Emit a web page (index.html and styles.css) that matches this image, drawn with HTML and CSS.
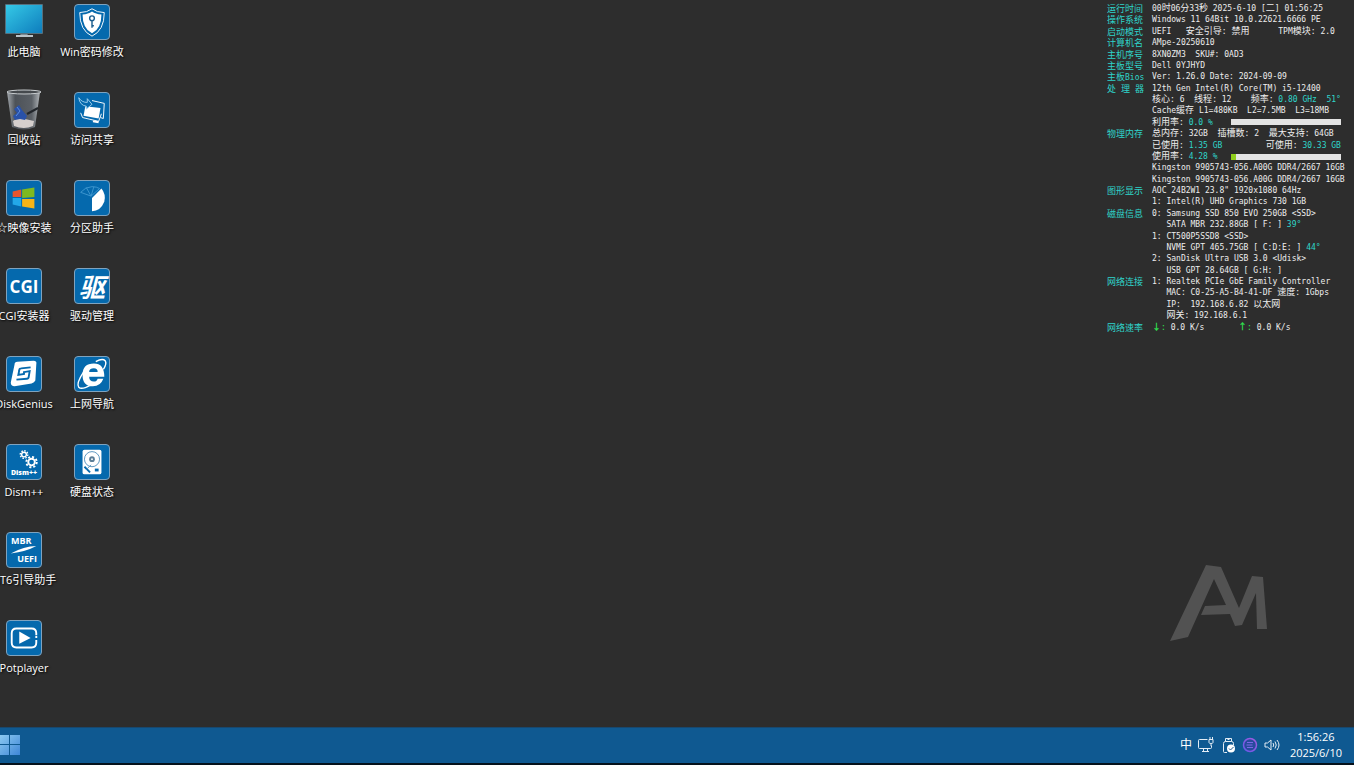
FILE: index.html
```html
<!DOCTYPE html>
<html lang="zh-CN">
<head>
    <meta charset="UTF-8">
    <meta name="viewport" content="width=device-width, initial-scale=1.0">
    <title>AMpe</title>
    <link rel="stylesheet" href="styles.css">
</head>
<body>
    <main class="desktop">
        <div class="icons">
            <button class="item">
                <svg class="pic" viewBox="0 0 36 36">
                    <defs>
                        <linearGradient id="screen" x1="0" y1="0" x2="1" y2="1">
                            <stop offset="0" stop-color="#35c9e6"/>
                            <stop offset="1" stop-color="#0e7dbd"/>
                        </linearGradient>
                    </defs>
                    <path d="M15 28h6l1 4h-8z" fill="#7d8a92"/>
                    <rect x="10" y="31" width="17" height="2" fill="#b9c2c8"/>
                    <rect x="-1" y="0" width="38" height="30" rx="1" fill="#56707d"/>
                    <rect x="0" y="1" width="36" height="28" fill="url(#screen)"/>
                </svg>
                <span class="label">此电脑</span>
            </button>
            <button class="item">
                <svg class="pic" viewBox="0 0 36 36">
                    <defs>
                        <linearGradient id="bin" x1="0" y1="0" x2="1" y2="0">
                            <stop offset="0" stop-color="#a3a8ad"/>
                            <stop offset="0.25" stop-color="#4d5258"/>
                            <stop offset="0.75" stop-color="#5b6066"/>
                            <stop offset="1" stop-color="#b0b4b8"/>
                        </linearGradient>
                    </defs>
                    <path d="M1 0l5 35q12 5 23 0l5-35z" fill="url(#bin)"/>
                    <path d="M7 29q6-5 12-2l9 2-1 5q-9 4-19 0z" fill="#d5cfcd"/>
                    <path d="M8 17l5-4 3 5 5 6-2 4-5-1-5 1-2-4 4-3z" fill="#2951a8"/>
                    <path d="M11 15l3 4-4 5" stroke="#5b8de0" fill="none"/>
                    <path d="M21 22l11-6" stroke="#22262b" stroke-width="2"/>
                    <ellipse cx="18" cy="0" rx="17" ry="2" fill="#45494d" stroke="#c9cdd0"/>
                </svg>
                <span class="label">回收站</span>
            </button>
            <button class="item">
                <span class="tile">
                    <svg viewBox="0 0 36 36">
                        <path d="M6 11l9-2v8H6z" fill="#e8552d"/>
                        <path d="M16 9l13-2v10l-13 1z" fill="#7eb920"/>
                        <path d="M6 18h9v9l-9-2z" fill="#23a8e8"/>
                        <path d="M16 19h13v10l-13-2z" fill="#f7b417"/>
                    </svg>
                </span>
                <span class="label">☆映像安装</span>
            </button>
            <button class="item">
                <span class="tile cgi">CGI</span>
                <span class="label">CGI安装器</span>
            </button>
            <button class="item">
                <span class="tile">
                    <svg viewBox="0 0 36 36">
                        <path d="M11 5l17-1q4 0 3 4l-1 17q-1 2-4 3L8 31q-4 0-4-4L8 8q0-3 3-3z" fill="#fff"/>
                        <path d="M25 11l-10 1q-2 0-2 2l-1 5 6-1v-3M10 24l11-1q2 0 2-2l1-6-6 1" fill="none" stroke="#0569ad" stroke-width="2"/>
                    </svg>
                </span>
                <span class="label">DiskGenius</span>
            </button>
            <button class="item">
                <span class="tile dism">
                    <svg viewBox="0 0 36 24" fill="none" stroke="#fff">
                        <circle cx="18" cy="8" r="2.500" stroke-width="1.500"/>
                        <circle cx="18" cy="8" r="4" stroke-width="1.500" stroke-dasharray="1.600 1.500"/>
                        <circle cx="26" cy="16" r="3.500" stroke-width="2"/>
                        <circle cx="26" cy="16" r="5.500" stroke-width="2" stroke-dasharray="2.200 2.100"/>
                    </svg>
                    <span>Dism++</span>
                </span>
                <span class="label">Dism++</span>
            </button>
            <button class="item">
                <span class="tile boot">
                    <span>MBR</span>
                    <svg viewBox="0 0 36 8"><path d="M4 8Q18 0 31 0 20 6 4 8z" fill="#fff"/></svg>
                    <span class="uefi">UEFI</span>
                </span>
                <span class="label">NT6引导助手</span>
            </button>
            <button class="item">
                <span class="tile">
                    <svg viewBox="0 0 36 36">
                        <path d="M31 15v-2q0-5-5-5H10q-5 0-5 5v10q0 5 5 5h16q5 0 5-5v-3M31 16v2" fill="none" stroke="#fff" stroke-width="2"/>
                        <path d="M13 11l12 7-12 6z" fill="#fff"/>
                    </svg>
                </span>
                <span class="label">Potplayer</span>
            </button>

            <button class="item">
                <span class="tile">
                    <svg viewBox="0 0 36 36">
                        <path d="M18 4q5 4 13 4 0 19-13 25Q5 27 5 8q8 0 13-4z" fill="none" stroke="#fff"/>
                        <path d="M18 7q4 3 10 3 0 15-10 20Q8 25 8 10q6 0 10-3z" fill="#fff"/>
                        <circle cx="18" cy="14" r="2.500" fill="none" stroke="#1b5d8e" stroke-width="1.500"/>
                        <path d="M18 17v7M18 22h2" stroke="#1b5d8e" stroke-width="1.500"/>
                    </svg>
                </span>
                <span class="label">Win密码修改</span>
            </button>
            <button class="item">
                <span class="tile">
                    <svg viewBox="0 0 36 36">
                        <path d="M18 8l13 3-1 16-3-1" fill="none" stroke="#fff"/>
                        <path d="M11 14l16 2-2 11-16-3z" fill="#fff"/>
                        <path d="M6 21l2 5 17 4 3-8" fill="none" stroke="#fff"/>
                        <path d="M4 5q3 5 9 5V6l5 6-6 5v-3Q5 13 4 5z" fill="#0569ad" stroke="#9fd0ee"/>
                        <path d="M19 30l6 1" stroke="#fff" stroke-width="2"/>
                    </svg>
                </span>
                <span class="label">访问共享</span>
            </button>
            <button class="item">
                <span class="tile">
                    <svg viewBox="0 0 36 36">
                        <path d="M18 18L28 8q5 6 3 14-4 10-13 10z" fill="#fff"/>
                        <path d="M17 16L6 12q5-6 12-6 5 0 8 2zM17 16L12 7M17 16l3-10" fill="none" stroke="#3f97cf"/>
                    </svg>
                </span>
                <span class="label">分区助手</span>
            </button>
            <button class="item">
                <span class="tile drive">驱</span>
                <span class="label">驱动管理</span>
            </button>
            <button class="item">
                <span class="tile">
                    <svg viewBox="0 0 36 36">
                        <path d="M30 23q-3 8-11 8Q8 31 8 19 8 7 20 7q11 0 11 14H15q0 5 5 5 3 0 4-3zM15 16h9q0-4-4-4-5 0-5 4z" fill="#fff" fill-rule="evenodd"/>
                        <path d="M22 5q7-4 10-1 2 3-2 9M9 16Q1 28 4 32q3 3 12-2" fill="none" stroke="#fff" stroke-width="1.500"/>
                    </svg>
                </span>
                <span class="label">上网导航</span>
            </button>
            <button class="item">
                <span class="tile">
                    <svg viewBox="0 0 36 36">
                        <rect x="8" y="5" width="20" height="26" rx="2" fill="#fff"/>
                        <circle cx="18" cy="15" r="8" fill="#fff" stroke="#5793bd"/>
                        <circle cx="18" cy="15" r="3" fill="#5d7f98"/>
                        <circle cx="18" cy="15" r="1" fill="#fff"/>
                        <path d="M10 23l6 6" stroke="#0569ad" stroke-width="2"/>
                        <path d="M21 25h4v3h-4z" fill="#0569ad"/>
                        <path d="M17 21l-5 5" stroke="#5793bd"/>
                    </svg>
                </span>
                <span class="label">硬盘状态</span>
            </button>
        </div>

        <aside class="side">
            <dl class="info">
                <dt>运行时间</dt>
                <dd>00<b>时</b>06<b>分</b>33<b>秒</b> 2025-6-10 [<b>二</b>] 01:56:25</dd>
                <dt>操作系统</dt>
                <dd>Windows 11 64Bit 10.0.22621.6666 PE</dd>
                <dt>启动模式</dt>
                <dd>UEFI   <b>安全引导</b>: <b>禁用</b>      TPM<b>模块</b>: 2.0</dd>
                <dt>计算机名</dt>
                <dd>AMpe-20250610</dd>
                <dt>主机序号</dt>
                <dd>8XN0ZM3  SKU#: 0AD3</dd>
                <dt>主板型号</dt>
                <dd>Dell 0YJHYD</dd>
                <dt>主板<span class="latin">Bios</span></dt>
                <dd>Ver: 1.26.0 Date: 2024-09-09</dd>
                <dt class="spread"><span>处</span><span>理</span><span>器</span></dt>
                <dd>12th Gen Intel(R) Core(TM) i5-12400</dd>
                <dd><b>核心</b>: 6  <b>线程</b>: 12    <b>频率</b>: <em>0.80 GHz  51°</em></dd>
                <dd>Cache<b>缓存</b> L1=480KB  L2=7.5MB  L3=18MB</dd>
                <dd class="usage"><label for="cpu"><b>利用率</b>: <em>0.0 %</em></label><progress id="cpu" value="0" max="100"></progress></dd>
                <dt>物理内存</dt>
                <dd><b>总内存</b>: 32GB  <b>插槽数</b>: 2  <b>最大支持</b>: 64GB</dd>
                <dd><b>已使用</b>: <em>1.35 GB</em>         <b>可使用</b>: <em>30.33 GB</em></dd>
                <dd class="usage"><label for="mem"><b>使用率</b>: <em>4.28 %</em></label><progress id="mem" value="4.28" max="100"></progress></dd>
                <dd>Kingston 9905743-056.A00G DDR4/2667 16GB</dd>
                <dd>Kingston 9905743-056.A00G DDR4/2667 16GB</dd>
                <dt>图形显示</dt>
                <dd>AOC 24B2W1 23.8" 1920x1080 64Hz</dd>
                <dd>1: Intel(R) UHD Graphics 730 1GB</dd>
                <dt>磁盘信息</dt>
                <dd>0: Samsung SSD 850 EVO 250GB &lt;SSD&gt;</dd>
                <dd>   SATA MBR 232.88GB [ F: ] <em>39°</em></dd>
                <dd>1: CT500P5SSD8 &lt;SSD&gt;</dd>
                <dd>   NVME GPT 465.75GB [ C:D:E: ] <em>44°</em></dd>
                <dd>2: SanDisk Ultra USB 3.0 &lt;Udisk&gt;</dd>
                <dd>   USB GPT 28.64GB [ G:H: ]</dd>
                <dt>网络连接</dt>
                <dd>1: Realtek PCIe GbE Family Controller</dd>
                <dd>   MAC: C0-25-A5-B4-41-DF <b>速度</b>: 1Gbps</dd>
                <dd>   IP:  192.168.6.82 <b>以太网</b></dd>
                <dd>   <b>网关</b>: 192.168.6.1</dd>
                <dt>网络速率</dt>
                <dd><i><b>↓</b>:</i> 0.0 K/s       <i><b>↑</b>:</i> 0.0 K/s</dd>
            </dl>
            <svg class="logo" viewBox="0 0 97 76">
                <path d="M0 76L36 0l15 2 18 41L82 11l11 1 4 52H87L86 28 72 60l-7 1-5-12-29 1 4-9 21-1L44 14 18 72z" fill="#525252"/>
            </svg>
        </aside>
    </main>

    <footer class="taskbar">
        <button class="start" aria-label="开始">
            <svg viewBox="0 0 20 20">
                <defs>
                    <linearGradient id="start" x1="0" y1="0" x2="1" y2="1">
                        <stop offset="0" stop-color="#8ccaf2"/>
                        <stop offset="1" stop-color="#3f86d6"/>
                    </linearGradient>
                </defs>
                <path d="M0 0h9v9H0zM10 0h10v9H10zM0 10h9v10H0zM10 10h10v10H10z" fill="url(#start)"/>
            </svg>
        </button>
        <div class="tray">
            <span class="ime">中</span>
            <svg viewBox="0 0 16 16" fill="none" stroke="#e4edf5">
                <path d="M9.500 2.500h-8q-1 0-1 1v7q0 1 1 1h11q1 0 1-1v-2M4 14.500h7M5.500 12v2M9.500 12v2M11 2.500h4v3q0 1-2 1t-2-1zM12 0v2M14.500 0v2M13 7v2"/>
            </svg>
            <svg viewBox="0 0 16 16" fill="none" stroke="#e4edf5">
                <path d="M5.500 4.500v-3h6v3M7 15.500H4.500q-1 0-1-1v-8q0-2 2-2h6q2 0 2 2V8M7.500 2.500h2"/>
                <circle cx="11" cy="11.500" r="4" fill="#fff" stroke="none"/>
                <path d="M9 11.500l1.500 1.500 3-3" stroke="#205d91"/>
            </svg>
            <svg viewBox="0 0 16 16" fill="none">
                <defs>
                    <linearGradient id="ring" x1="0" y1="1" x2="1" y2="0">
                        <stop offset="0" stop-color="#6658e8"/>
                        <stop offset="1" stop-color="#a45ce0"/>
                    </linearGradient>
                </defs>
                <circle cx="8" cy="8" r="6.500" fill="#284a9c" stroke="url(#ring)" stroke-width="1.500"/>
                <path d="M5 5.500h6M4.500 8h6M5 10.500h6" stroke="#7a68e6"/>
            </svg>
            <svg viewBox="0 0 16 16" fill="none" stroke="#e4edf5">
                <path d="M1 6h2.500L7 3v10l-3.500-3H1zM9 6q1.500 2 0 4M11 4.500q2.500 3.500 0 7M13 3q4 5 0 10"/>
            </svg>
            <time class="clock">1:56:26<br>2025/6/10</time>
        </div>
    </footer>
</body>
</html>
```

FILE: styles.css
```css
* {
    box-sizing: border-box;
}

body {
    margin: 0;
    height: 100vh;
    display: flex;
    flex-direction: column;
    overflow: hidden;
    background-color: #2d2d2d;
    color: #fff;
    font-family: "Open Sans", "Noto Sans CJK SC", sans-serif;
    font-size: 11px;
}
button {
    padding: 0;
    border: none;
    background: none;
    color: inherit;
    font: inherit;
    cursor: pointer;
}
svg {
    display: block;
}

/* desktop */
.desktop {
    flex: 1;
    min-height: 0;
    display: flex;
    justify-content: space-between;
}
.icons {
    display: grid;
    grid-auto-flow: column;
    grid-template-rows: repeat(8, 56px);
    grid-auto-columns: 48px;
    gap: 32px 20px;
    padding-top: 4px;
}
.item {
    display: flex;
    flex-direction: column;
    align-items: center;
    gap: 4px;
}
.pic {
    width: 36px;
    height: 36px;
    overflow: visible;
}
.tile {
    display: flex;
    flex-direction: column;
    align-items: center;
    justify-content: center;
    width: 36px;
    height: 36px;
    border: 1px solid #7fa3bf;
    border-radius: 4px;
    background-color: #0569ad;
    font-weight: bold;
}
.tile svg {
    width: 100%;
}
.label {
    line-height: 16px;
    white-space: nowrap;
    text-shadow: 1px 1px 2px #000;
}
.cgi {
    font-size: 17px;
}
.drive {
    font-family: "Noto Sans CJK SC", sans-serif;
    font-size: 26px;
    font-style: italic;
    line-height: 34px;
}
.dism {
    font-size: 7px;
    font-weight: 800;
    line-height: 8px;
}
.boot {
    font-size: 9px;
    line-height: 10px;
    align-items: flex-start;
}
.boot span {
    padding: 0 4px;
}
.boot .uefi {
    align-self: flex-end;
}

/* system info */
.side {
    display: flex;
    flex-direction: column;
    justify-content: space-between;
    width: 247px;
    padding: 3px 0 86px;
}
.info {
    display: grid;
    grid-template-columns: 45px 1fr;
    grid-template-rows: repeat(29, minmax(0, 1fr));
    height: 330px;
    margin: 0;
    color: #eee;
    font-family: "DejaVu Sans Mono", "Noto Sans CJK SC", monospace;
    font-size: 8px;
    line-height: 11px;
    white-space: pre;
}
.info dt {
    grid-column: 1;
    padding-top: 1px;
    color: #2fd5cb;
    font-size: 9px;
}
.info dd {
    grid-column: 2;
    margin: 0;
}
.info b {
    font-size: 9px;
    font-weight: normal;
    line-height: 0;
}
.info em {
    color: #2fd5cb;
    font-style: normal;
}
.info i {
    color: #2fe04f;
    font-style: normal;
}
.info i b {
    font-family: "Noto Sans CJK SC", sans-serif;
    font-weight: bold;
}
.latin {
    font-size: 8px;
}
.spread {
    display: flex;
    justify-content: space-between;
    padding-right: 8px;
}
.usage {
    display: flex;
    align-items: center;
    justify-content: space-between;
}
progress {
    appearance: none;
    width: 110px;
    height: 6px;
    margin-right: 13px;
    border: none;
    background-color: #e3e3e3;
}
progress::-webkit-progress-bar {
    background-color: #e3e3e3;
}
progress::-webkit-progress-value {
    background-color: #8fce1c;
}
.logo {
    width: 97px;
    margin-left: 63px;
}

/* taskbar */
.taskbar {
    display: flex;
    align-items: center;
    justify-content: space-between;
    height: 38px;
    padding-bottom: 2px;
    border-top: 1px solid #17486f;
    border-bottom: 2px solid #06121c;
    background-color: #0f5991;
}
.start svg {
    width: 20px;
    height: 20px;
}
.tray {
    display: flex;
    align-items: center;
    gap: 6px;
    padding-right: 12px;
}
.tray svg {
    width: 16px;
    height: 16px;
}
.ime {
    font-size: 12px;
    line-height: 16px;
}
.clock {
    margin-left: 4px;
    line-height: 16px;
    text-align: center;
}
```
